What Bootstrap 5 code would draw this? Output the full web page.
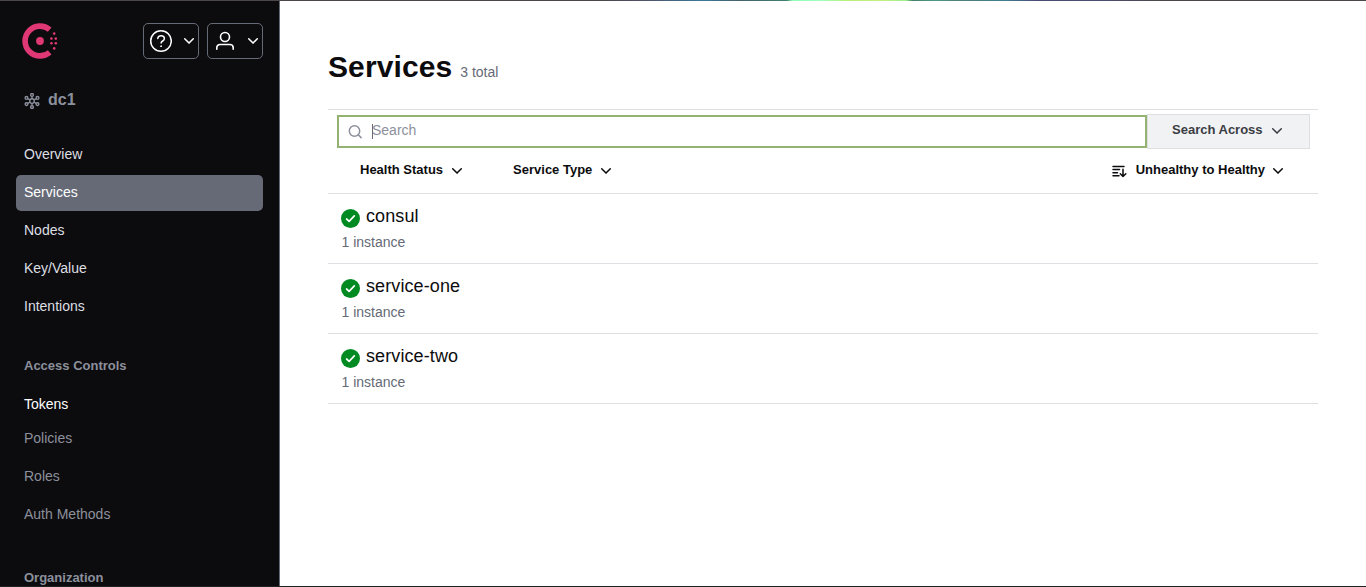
<!DOCTYPE html>
<html lang="en">
<head>
<meta charset="utf-8">
<title>Services - Consul</title>
<meta name="viewport" content="width=device-width, initial-scale=1">
<link href="https://cdn.jsdelivr.net/npm/bootstrap@5.3.0/dist/css/bootstrap.min.css" rel="stylesheet">
<style>
body{font-family:"Liberation Sans",Arial,sans-serif;font-size:14px;line-height:20px;color:#0c0c0e;background:#fff}
.app{height:100vh;border-bottom:1px solid #222224}
.topstrip{height:1px;background:linear-gradient(90deg,#4b4748 0 44%,#505068 47%,#3a7a98 51.5%,#45606c 54%,#3f8070 57.6%,#8dffb5 58%,#9fffc0 60%,#b8f078 62%,#c4f080 64.5%,#9cf08c 66.3%,#46806c 66.8%,#4c9a88 68.5%,#508078 70%,#3f7f90 73.5%,#4a4a72 76%,#4b4c70 81%,#4b4748 85%)}
.sidebar{width:280px;background:#0c0c0e;border-right:1px solid #656a76;padding:22px 16px 0}
.logo{width:36px;height:36px;margin-left:6px}
.iconbtn{width:56px;height:36px;border:1px solid #656a76;border-radius:5px;background:transparent;color:#fff}
.dc{height:28px;margin:27px 0 23px;padding-left:8px;color:#8c909c;font-size:16px;font-weight:700}
.side-nav{gap:2px}
.side-nav .nav-link{height:36px;padding:7px 8px 9px;color:#dedfe3;border-radius:5px}
.side-nav .nav-link.active{background:#656a76;color:#fff}
.side-nav .dim{color:#8c909c}
.side-title{color:#8c909c;font-size:13px;font-weight:700;padding-left:8px}
.content{padding:49px 48px 0}
.content h1{font-size:30px;line-height:34px;font-weight:700;letter-spacing:.1px}
.heading-row{margin-bottom:25px}
.muted-text{color:#656a76}
.filters{height:85px;border-top:1px solid #dedfe3;border-bottom:1px solid #dedfe3;padding:4px 8px 0 9px;font-size:13px;font-weight:700}
.searchbox{height:33px;margin-top:1px;border:2px solid #94b373;padding:0 10px 2px 9px;font-size:14px;font-weight:400;color:#8c909c}
.caret{width:1px;height:15px;margin-left:9px;background:#656a76}
.across{width:163px;height:35px;background:#f1f2f3;border:1px solid #dedfe3;color:#3b3d45;padding:0 26px 4px 24px}
.sorts{height:42px;padding:0 26px 0 23px}
.service{height:70px;border-bottom:1px solid #dedfe3;padding:12px 13px}
.service h2{font-size:18px;line-height:20px;font-weight:400;letter-spacing:.1px;margin-left:6px}
.service p{margin:0;padding:4px 0 0 .5px}
.service svg{margin-top:3px}
</style>
</head>
<body>
<svg class="d-none">
<symbol id="chev" viewBox="0 0 12 8"><path d="M1.700 1.700 6 6.100l4.300-4.400" fill="none" stroke="currentColor" stroke-width="1.500" stroke-linecap="round" stroke-linejoin="round"/></symbol>
<symbol id="ok" viewBox="0 0 19 19"><circle cx="9.500" cy="9.500" r="9.500" fill="#008a22"/><path d="m5.600 10 2.500 2.300 5.200-5.400" fill="none" stroke="#fff" stroke-width="1.700" stroke-linecap="round" stroke-linejoin="round"/></symbol>
</svg>
<div class="app d-flex flex-column overflow-hidden">
<div class="topstrip flex-shrink-0"></div>
<div class="d-flex flex-grow-1 overflow-hidden">
<aside class="sidebar flex-shrink-0 overflow-hidden">
  <div class="d-flex align-items-center">
    <svg class="logo" viewBox="0 0 36 36" fill="#e03875"><path d="M27.700 29.300A14.900 14.900 0 1 1 27.700 6.700" fill="none" stroke="#e03875" stroke-width="5.600"/><circle cx="18" cy="18" r="3.900"/><circle cx="32.200" cy="10.600" r="1.300"/><circle cx="29.400" cy="15.600" r="1.300"/><circle cx="33.800" cy="15.600" r="1.300"/><circle cx="29.400" cy="20.300" r="1.300"/><circle cx="33.800" cy="20.300" r="1.300"/><circle cx="32.200" cy="25.400" r="1.300"/></svg>
    <div class="d-flex gap-2 ms-auto">
      <button class="iconbtn d-flex align-items-center p-0" aria-label="Help">
        <svg width="24" height="24" class="ms-1" viewBox="0 0 24 24" fill="none" stroke="currentColor" stroke-width="1.500" stroke-linecap="round"><circle cx="13" cy="12" r="10.300"/><path d="M9.800 9.500C9.800 5.800 16.400 5.800 16.400 9.600c0 2.600-3.300 2.200-3.300 4.500"/><circle cx="13" cy="17.200" r=".45" fill="currentColor" stroke-width="1"/></svg>
        <svg width="12" height="8" class="ms-auto me-1" style="translate:1px"><use href="#chev"/></svg>
      </button>
      <button class="iconbtn d-flex align-items-center p-0" aria-label="Account">
        <svg width="24" height="24" class="ms-1" viewBox="0 0 24 24" fill="none" stroke="currentColor" stroke-width="1.600" stroke-linecap="round"><circle cx="13" cy="8" r="4.500"/><path d="M4.800 20.200v-1.500a3.200 3.200 0 0 1 3.200-3.200h10a3.200 3.200 0 0 1 3.200 3.200v1.500"/></svg>
        <svg width="12" height="8" class="ms-auto me-1" style="translate:1px"><use href="#chev"/></svg>
      </button>
    </div>
  </div>
  <div class="dc d-flex align-items-center gap-2">
    <svg width="16" height="16" style="translate:0 1px" viewBox="0 0 16 16" fill="none" stroke="currentColor" stroke-width="1.350"><circle cx="8" cy="8" r="2.300"/><circle cx="8" cy="1.900" r="1.400"/><circle cx="8" cy="14.100" r="1.400"/><circle cx="2.500" cy="4.900" r="1.400"/><circle cx="13.500" cy="4.900" r="1.400"/><circle cx="2.500" cy="11.100" r="1.400"/><circle cx="13.500" cy="11.100" r="1.400"/><path d="M8 3.400v2.500M8 10v2.600M3.700 5.600l2.500 1.400M12.300 5.600 9.800 7M3.700 10.400 6.200 9M12.300 10.400 9.800 9"/></svg>
    <span>dc1</span>
  </div>
  <nav class="side-nav nav flex-column">
    <a class="nav-link">Overview</a>
    <a class="nav-link active">Services</a>
    <a class="nav-link">Nodes</a>
    <a class="nav-link">Key/Value</a>
    <a class="nav-link">Intentions</a>
  </nav>
  <div class="side-title" style="margin:31px 0 11px">Access Controls</div>
  <nav class="side-nav nav flex-column">
    <a class="nav-link text-white" style="height:32px">Tokens</a>
    <a class="nav-link dim">Policies</a>
    <a class="nav-link dim">Roles</a>
    <a class="nav-link dim">Auth Methods</a>
  </nav>
  <div class="side-title" style="margin-top:35px">Organization</div>
</aside>
<main class="content flex-grow-1">
  <div class="heading-row d-flex align-items-baseline gap-2">
    <h1 class="mb-0">Services</h1><span class="muted-text">3 total</span>
  </div>
  <div class="filters">
    <div class="d-flex">
      <div class="searchbox flex-grow-1 d-flex align-items-center">
        <svg width="14" height="14" style="translate:0 1px" viewBox="0 0 14 14" fill="none" stroke="currentColor" stroke-width="1.500" stroke-linecap="round"><circle cx="6.500" cy="6" r="5.200"/><path d="m10.300 9.800 2.800 2.800"/></svg>
        <span class="caret" style="translate:1px 1px"></span><span style="translate:0 -1px">Search</span>
      </div>
      <div class="across d-flex align-items-center justify-content-between"><span>Search Across</span><svg width="12" height="8" style="translate:0 1px"><use href="#chev"/></svg></div>
    </div>
    <div class="sorts d-flex align-items-center">
      <span>Health Status</span><svg width="12" height="8" class="ms-2" style="translate:0 1px"><use href="#chev"/></svg>
      <span style="margin-left:50px">Service Type</span><svg width="12" height="8" class="ms-2" style="translate:0 1px"><use href="#chev"/></svg>
      <svg width="15" height="13" class="ms-auto" style="translate:0 1px;margin-right:9px" viewBox="0 0 15 13" fill="none" stroke="currentColor" stroke-width="1.500" stroke-linecap="round" stroke-linejoin="round"><path d="M1 1.500h11M1 4.600h6.500M1 7.700h4.500M1 10.800h6M11 4.300v7.100M8.300 8.800l2.700 2.700 2.800-2.700"/></svg>
      <span>Unhealthy to Healthy</span><svg width="12" height="8" style="translate:0 1px;margin-left:7px"><use href="#chev"/></svg>
    </div>
  </div>
  <div class="service"><div class="d-flex"><svg width="19" height="19"><use href="#ok"/></svg><h2 class="mb-0">consul</h2></div><p class="muted-text">1 instance</p></div>
  <div class="service"><div class="d-flex"><svg width="19" height="19"><use href="#ok"/></svg><h2 class="mb-0">service-one</h2></div><p class="muted-text">1 instance</p></div>
  <div class="service"><div class="d-flex"><svg width="19" height="19"><use href="#ok"/></svg><h2 class="mb-0">service-two</h2></div><p class="muted-text">1 instance</p></div>
</main>
</div>
</div>
<script src="https://cdn.jsdelivr.net/npm/bootstrap@5.3.0/dist/js/bootstrap.bundle.min.js"></script>
</body>
</html>
